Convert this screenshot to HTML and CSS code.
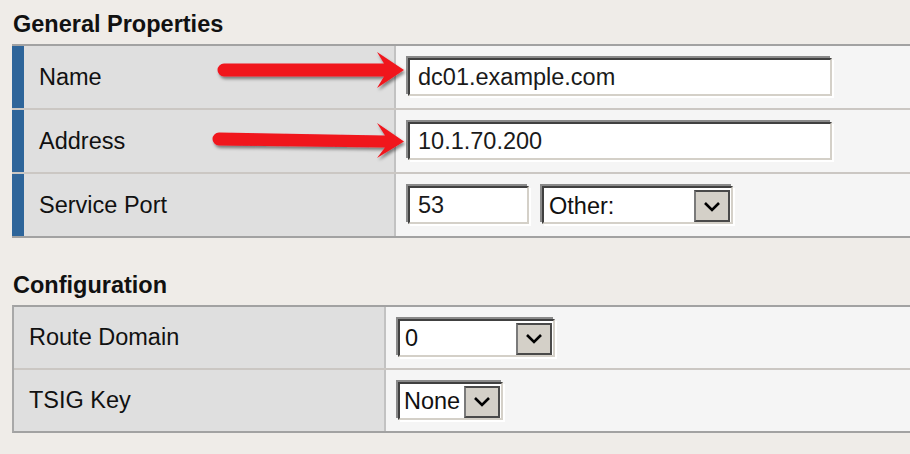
FILE: index.html
```html
<!DOCTYPE html>
<html lang="en">
<head>
<meta charset="utf-8">
<title>Node Properties</title>
<link rel="stylesheet" href="styles.css">
</head>
<body>
<div class="page">
  <section class="group group--general">
    <h2 class="group-title">General Properties</h2>
    <div class="props props--marked">
      <div class="row">
        <div class="label">Name</div>
        <div class="value"><input class="field field--wide" type="text" value="dc01.example.com"></div>
      </div>
      <div class="row">
        <div class="label">Address</div>
        <div class="value"><input class="field field--wide" type="text" value="10.1.70.200"></div>
      </div>
      <div class="row">
        <div class="label">Service Port</div>
        <div class="value">
          <input class="field field--port" type="text" value="53">
          <div class="combo combo--service"><span class="combo-text">Other:</span><span class="combo-btn"><svg viewBox="0 0 18 11" width="18" height="11"><path d="M2 2 L9 9 L16 2" fill="none" stroke="#000" stroke-width="2.6"/></svg></span></div>
        </div>
      </div>
    </div>
  </section>

  <section class="group group--config">
    <h2 class="group-title">Configuration</h2>
    <div class="props props--plain">
      <div class="row">
        <div class="label">Route Domain</div>
        <div class="value">
          <div class="combo combo--route"><span class="combo-text">0</span><span class="combo-btn"><svg viewBox="0 0 18 11" width="18" height="11"><path d="M2 2 L9 9 L16 2" fill="none" stroke="#000" stroke-width="2.6"/></svg></span></div>
        </div>
      </div>
      <div class="row">
        <div class="label">TSIG Key</div>
        <div class="value">
          <div class="combo combo--tsig"><span class="combo-text">None</span><span class="combo-btn"><svg viewBox="0 0 18 11" width="18" height="11"><path d="M2 2 L9 9 L16 2" fill="none" stroke="#000" stroke-width="2.6"/></svg></span></div>
        </div>
      </div>
    </div>
  </section>

  <svg class="annotations" width="910" height="454" viewBox="0 0 910 454" aria-hidden="true">
    <defs>
      <filter id="shadow" x="-10%" y="-50%" width="120%" height="200%">
        <feDropShadow dx="1.5" dy="2.5" stdDeviation="1.5" flood-color="#000" flood-opacity="0.45"/>
      </filter>
    </defs>
    <path class="arrow" filter="url(#shadow)" d="M224 63.5 L384 63.5 L377 52 L404 70 L377 88 L384 76.5 L224 76.5 A6.5 6.5 0 0 1 224 63.5 Z"/>
    <path class="arrow" filter="url(#shadow)" d="M219 132.5 L385 135.5 L377 123 L404 141.5 L377 158 L385 147.5 L219 145.5 A6.5 6.5 0 0 1 219 132.5 Z"/>
  </svg>
</div>
</body>
</html>
```

FILE: styles.css
```css
* { box-sizing: border-box; }

html, body {
  margin: 0;
  padding: 0;
  background: #efece8;
}

body {
  font-family: "Liberation Sans", Arial, sans-serif;
  font-size: 23.5px;
  color: #111;
  width: 910px;
  height: 454px;
  overflow: hidden;
}

.page {
  position: relative;
  padding: 10px 0 0 12px;
}

.group-title {
  margin: 0 0 6px 0;
  font-size: 23.5px;
  line-height: 28px;
  font-weight: bold;
  color: #111;
  padding-left: 1px;
}

.group--config { margin-top: 33px; }

.props {
  border-top: 2px solid #a2a2a2;
  border-bottom: 2px solid #a2a2a2;
}

.props--plain { border-left: 2px solid #a8a8a8; }

.row {
  display: grid;
  align-items: stretch;
}

.props--marked .row {
  grid-template-columns: 382px 1fr;
  height: 64px;
  border-bottom: 2px solid #cbc7c3;
}

.props--plain .row {
  grid-template-columns: 370px 1fr;
  height: 63px;
  border-bottom: 2px solid #cbc7c3;
}

.row:last-child { border-bottom: none; height: 62px; }
.props--plain .row:last-child { height: 61px; }

.label {
  background: #dfdfdf;
  display: flex;
  align-items: center;
  padding-left: 15px;
  color: #111;
}

.props--marked .label {
  border-left: 12px solid #2e659a;
}

.value {
  background: #f5f5f5;
  border-left: 2px solid #c2c2c2;
  display: flex;
  align-items: center;
  gap: 13px;
  padding-left: 12px;
}

.field {
  font: inherit;
  color: #1a1a1a;
  height: 38px;
  margin: 0;
  padding: 0 0 0 8px;
  border: 2px solid;
  border-color: #404040 #d4d0c8 #d4d0c8 #404040;
  box-shadow: -2px -2px 0 0 #8a8a8a, 2px 2px 0 0 #ffffff;
  background: #fff;
  outline: none;
}

.field--wide { width: 424px; }
.field--port { width: 121px; }

.combo {
  display: flex;
  align-items: stretch;
  height: 38px;
  padding: 2px 1px 0 0;
  border: 2px solid;
  border-color: #404040 #d4d0c8 #d4d0c8 #404040;
  box-shadow: -2px -2px 0 0 #8a8a8a, 2px 2px 0 0 #ffffff;
  background: #fff;
}

.combo-text {
  flex: 1;
  display: flex;
  align-items: center;
  padding-left: 5px;
  color: #111;
  white-space: nowrap;
}

.combo-btn {
  width: 36px;
  background: #d4d0c8;
  border: 2px solid #4a4a4a;
  border-left-color: #7a7a7a;
  display: flex;
  align-items: center;
  justify-content: center;
}

.combo--service { width: 191px; }
.combo--route { width: 157px; }
.combo--tsig { width: 105px; }
.combo--tsig .combo-text { padding-left: 4px; }

.annotations {
  position: absolute;
  left: 0;
  top: 0;
  pointer-events: none;
}

.arrow { fill: #f0141e; }
```
